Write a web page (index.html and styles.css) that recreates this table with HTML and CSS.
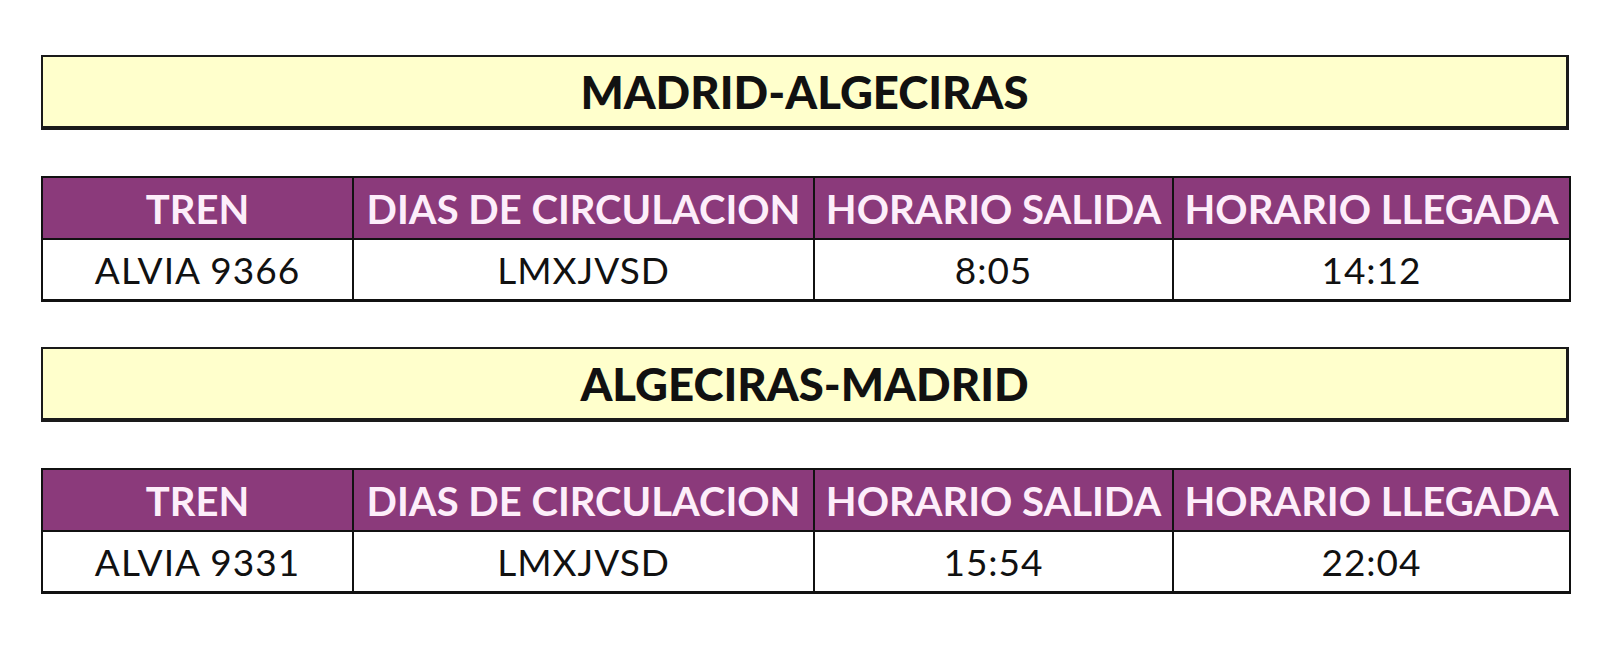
FILE: index.html
```html
<!DOCTYPE html>
<html lang="es">
<head>
<meta charset="utf-8">
<title>Horarios Madrid-Algeciras</title>
<link rel="stylesheet" href="styles.css">
</head>
<body>
<div class="page">
  <section class="route">
    <div class="route-title">MADRID-ALGECIRAS</div>
    <table class="schedule">
      <colgroup><col class="c1"><col class="c2"><col class="c3"><col class="c4"></colgroup>
      <thead>
        <tr><th>TREN</th><th>DIAS DE CIRCULACION</th><th>HORARIO SALIDA</th><th>HORARIO LLEGADA</th></tr>
      </thead>
      <tbody>
        <tr><td>ALVIA 9366</td><td>LMXJVSD</td><td>8:05</td><td>14:12</td></tr>
      </tbody>
    </table>
  </section>
  <section class="route">
    <div class="route-title">ALGECIRAS-MADRID</div>
    <table class="schedule">
      <colgroup><col class="c1"><col class="c2"><col class="c3"><col class="c4"></colgroup>
      <thead>
        <tr><th>TREN</th><th>DIAS DE CIRCULACION</th><th>HORARIO SALIDA</th><th>HORARIO LLEGADA</th></tr>
      </thead>
      <tbody>
        <tr><td>ALVIA 9331</td><td>LMXJVSD</td><td>15:54</td><td>22:04</td></tr>
      </tbody>
    </table>
  </section>
</div>
</body>
</html>
```
FILE: styles.css
```css
html, body {
  margin: 0;
  padding: 0;
  background: #ffffff;
}
.page {
  width: 1600px;
  height: 660px;
  box-sizing: border-box;
  padding: 55px 0 0 41px;
  font-family: Lato, "Liberation Sans", sans-serif;
  color: #111;
}
.route {
  width: 1528px;
  margin-bottom: 45px;
}
.route-title {
  box-sizing: border-box;
  height: 75px;
  background: #ffffcc;
  border-style: solid;
  border-color: #1a1a1a;
  border-width: 2px 3px 4px 2px;
  display: flex;
  align-items: center;
  justify-content: center;
  font-weight: 900;
  font-size: 45.5px;
  color: #111;
  margin-bottom: 46px;
}
.schedule {
  width: 1528px;
  border-collapse: collapse;
  table-layout: fixed;
  border-top: 2px solid #111;
  border-bottom: 3px solid #111;
  border-left: 2px solid #111;
  border-right: 2px solid #111;
}
.c1 { width: 311px; }
.c2 { width: 461px; }
.c3 { width: 359px; }
.c4 { width: 397px; }
.schedule th {
  background: #8b3a7b;
  color: #fdeefa;
  font-weight: 700;
  font-size: 40px;
  height: 58px;
  padding: 2px 0 0;
  text-align: center;
  border: 2px solid #111;
  white-space: nowrap;
  overflow: hidden;
}
.schedule td {
  background: #ffffff;
  color: #111;
  font-weight: 400;
  font-size: 37px;
  letter-spacing: 1px;
  height: 59px;
  padding: 0;
  text-align: center;
  border-left: 2px solid #111;
  border-right: 2px solid #111;
  white-space: nowrap;
}
```
